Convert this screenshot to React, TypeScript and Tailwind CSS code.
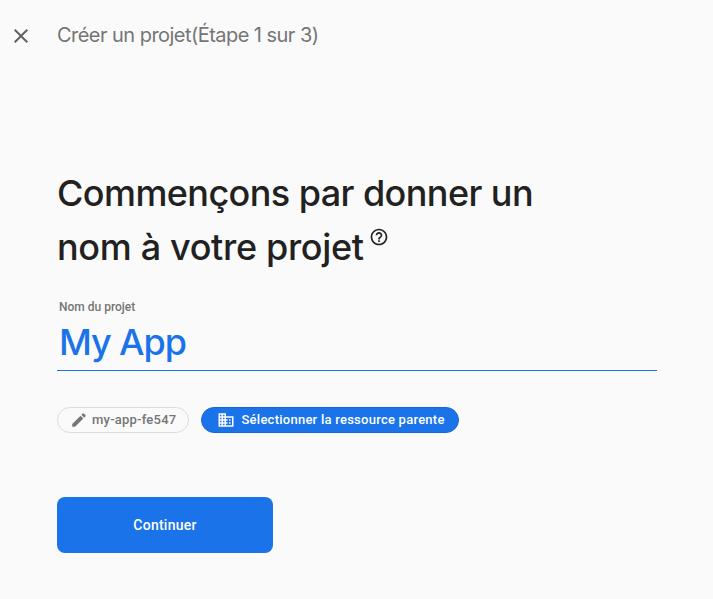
import { MdClose, MdHelpOutline, MdEdit, MdDomain } from "react-icons/md";

export default function App() {
  return (
    <div className="h-[599px] w-[713px] overflow-hidden bg-[#fafafa] font-['Roboto',sans-serif]">
      <header className="flex h-[70px] items-center pl-[9px] pt-px">
        <button aria-label="Fermer" className="text-[#616161]"><MdClose size={24} /></button>
        <div className="ml-6 whitespace-nowrap pb-0.5 font-['Inter',sans-serif] text-xl leading-7 tracking-[-0.54px] text-[#757575]">Créer un projet(Étape 1 sur 3)</div>
      </header>
      <main className="pl-[57px] pt-24">
        <h1 className="whitespace-nowrap font-['Inter',sans-serif] text-4xl font-medium leading-[54px] text-[#212121]">
          <div className="tracking-[-0.58px]">Commençons par donner un</div>
          <div className="flex h-[54px] tracking-[-0.33px]">
            <span className="w-[307px]">nom à votre projet</span>
            <MdHelpOutline size={20} className="ml-[5px] mt-[7px]" />
          </div>
        </h1>
        <div className="mt-[25px] pl-0.5 text-xs font-medium leading-4 text-[#757575]">Nom du projet</div>
        <div className="h-[56px] w-[600px] border-b border-[#1a73e8] pl-0.5 font-['Inter',sans-serif] text-4xl font-medium leading-[54px] tracking-[-1.1px] text-[#1a73e8]">My App</div>
        <div className="mt-9 flex gap-3">
          <button className="flex h-[26px] w-[132px] items-center gap-1 rounded-full border border-[#dadce0] pl-3 text-[13px] font-medium tracking-[0.22px] text-[#757575]"><MdEdit size={18} />my-app-fe547</button>
          <button className="flex h-[26px] w-[258px] items-center gap-[6.5px] whitespace-nowrap rounded-full border border-[#1967d2] bg-[#1a73e8] pl-[15px] text-[13px] font-medium tracking-[0.25px] text-white"><MdDomain size={18} />Sélectionner la ressource parente</button>
        </div>
        <button className="mt-16 h-14 w-[216px] rounded-lg bg-[#1a73e8] text-sm font-medium tracking-[0.25px] text-white">Continuer</button>
      </main>
    </div>
  );
}
